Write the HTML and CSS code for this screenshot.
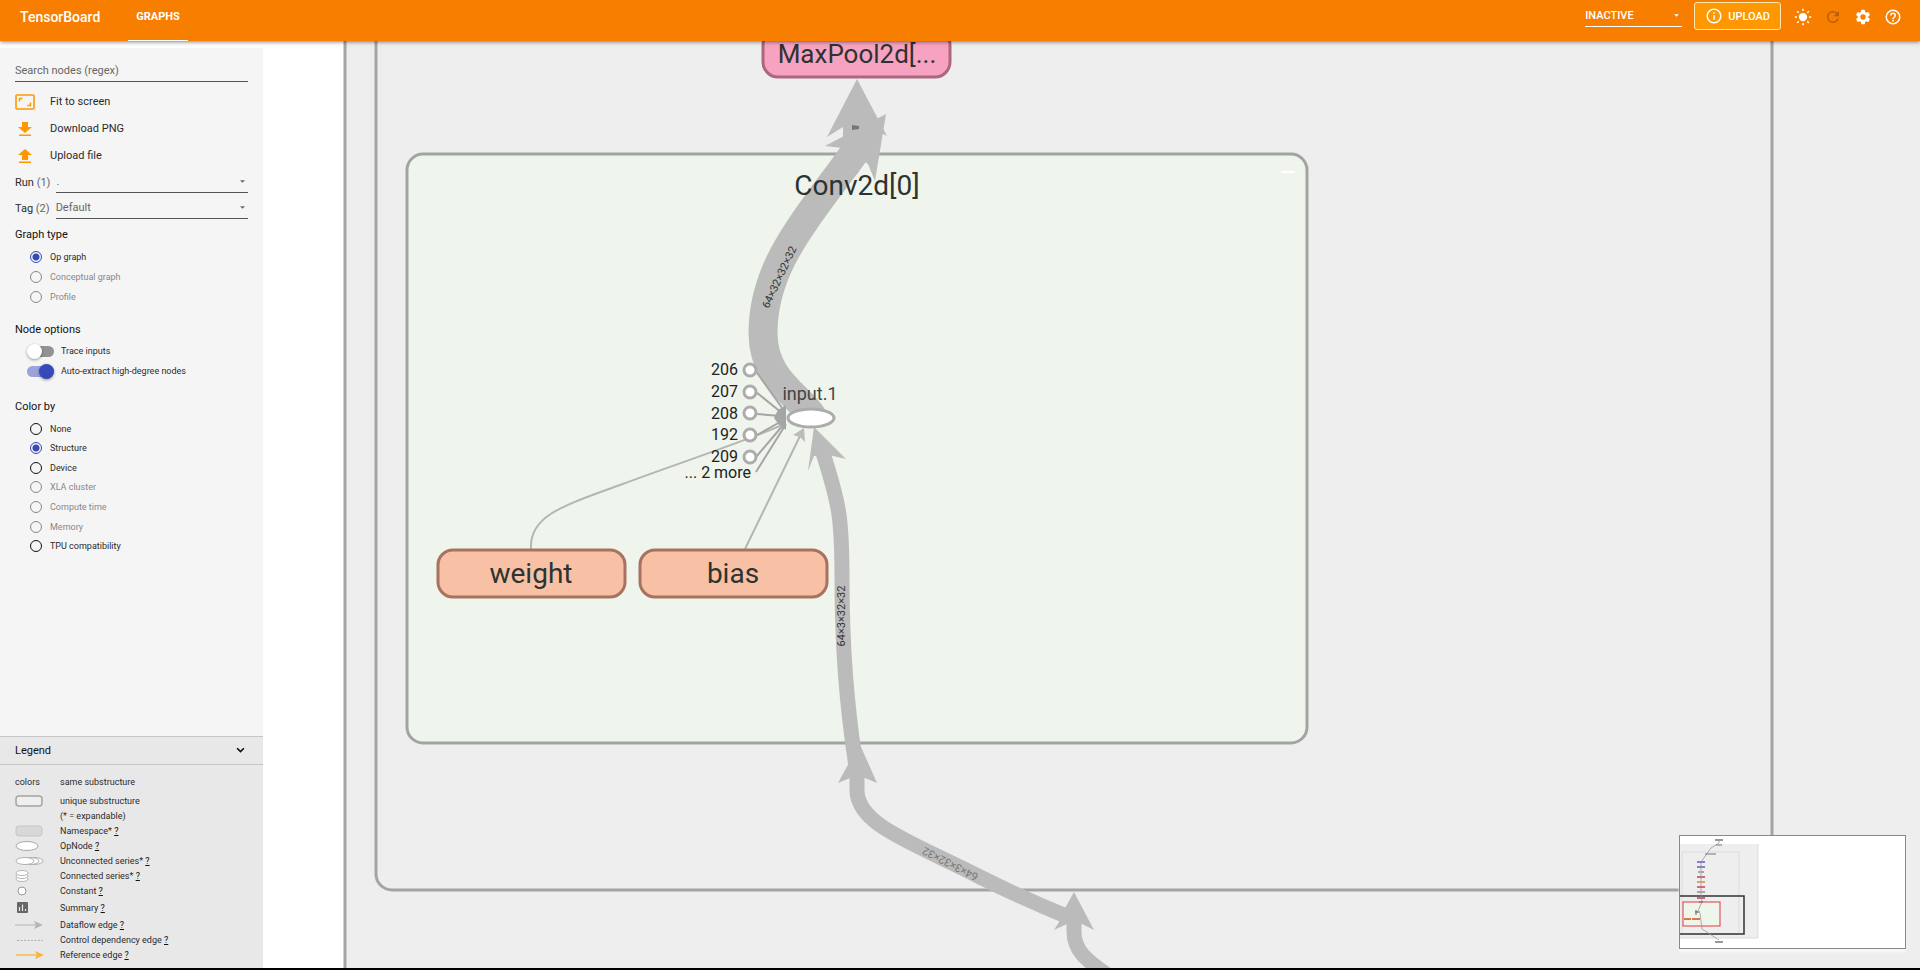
FILE: index.html
```html
<!DOCTYPE html>
<html lang="en">
<head>
<meta charset="utf-8">
<title>TensorBoard</title>
<link rel="stylesheet" href="styles.css">
</head>
<body>
<header class="toolbar">
  <h1 class="brand">TensorBoard</h1>
  <nav class="tabs"><a class="tab" href="#graphs">GRAPHS</a></nav>
  <div class="tools">
    <div class="picker picker-light">
      <select class="picker-input" aria-label="Inactive plugins"><option>INACTIVE</option></select>
      <svg class="caret" viewBox="0 0 6 3" aria-hidden="true"><path d="M0 0h6l-3 3z"/></svg>
    </div>
    <button class="upload" type="button">
      <svg class="icon-upload" viewBox="0 0 24 24" aria-hidden="true"><path d="M11 7h2v2h-2zm0 4h2v6h-2zm1-9C6.480 2 2 6.480 2 12s4.480 10 10 10 10-4.480 10-10S17.520 2 12 2zm0 18c-4.410 0-8-3.590-8-8s3.590-8 8-8 8 3.590 8 8-3.590 8-8 8z"/></svg>
      UPLOAD
    </button>
    <button class="tool" type="button" aria-label="Theme">
      <svg viewBox="0 0 24 24"><circle cx="12" cy="12" r="5.500"/><path d="M11 1h2v3h-2zM11 20h2v3h-2zM1 11h3v2H1zM20 11h3v2h-3zM3.500 4.900l1.400-1.400L7 5.600 5.600 7zM17 18.400l1.400-1.400 2.100 2.100-1.400 1.400zM17 5.600l2.100-2.100 1.400 1.400L18.400 7zM3.500 19.100L5.600 17 7 18.400l-2.100 2.100z"/></svg>
    </button>
    <button class="tool tool-off" type="button" aria-label="Reload" disabled>
      <svg viewBox="0 0 24 24"><path d="M17.650 6.350A7.960 7.960 0 0 0 12 4a8 8 0 1 0 7.730 10h-2.080A6 6 0 1 1 12 6c1.660 0 3.140.690 4.220 1.780L13 11h7V4z"/></svg>
    </button>
    <button class="tool" type="button" aria-label="Settings">
      <svg viewBox="0 0 24 24"><path d="M19.140 12.940c.040-.300.060-.610.060-.940s-.020-.640-.070-.940l2.030-1.580a.490.490 0 0 0 .120-.610l-1.920-3.320a.488.488 0 0 0-.590-.220l-2.390.960a7.030 7.030 0 0 0-1.620-.940l-.360-2.540A.484.484 0 0 0 13.920 2.400h-3.840c-.240 0-.430.170-.470.410l-.360 2.540c-.590.240-1.130.570-1.620.940l-2.390-.960a.480.480 0 0 0-.590.220L2.740 8.870a.470.470 0 0 0 .120.610l2.030 1.580c-.050.300-.090.630-.090.940s.020.640.070.940l-2.030 1.580a.490.490 0 0 0-.120.610l1.920 3.320c.120.220.370.290.590.220l2.390-.960c.500.380 1.030.700 1.620.940l.360 2.540c.050.240.240.410.480.410h3.840c.240 0 .440-.170.470-.410l.360-2.540c.590-.240 1.130-.560 1.620-.940l2.390.960c.220.080.470 0 .590-.220l1.920-3.320a.470.470 0 0 0-.120-.610zM12 15.600a3.600 3.600 0 1 1 0-7.200 3.600 3.600 0 0 1 0 7.200z"/></svg>
    </button>
    <button class="tool" type="button" aria-label="Help">
      <svg viewBox="0 0 24 24"><path d="M11 18h2v-2h-2zm1-16a10 10 0 1 0 0 20 10 10 0 0 0 0-20zm0 18a8 8 0 1 1 0-16 8 8 0 0 1 0 16zm0-14a4 4 0 0 0-4 4h2a2 2 0 1 1 4 0c0 2-3 1.750-3 5h2c0-2.250 3-2.500 3-5a4 4 0 0 0-4-4z"/></svg>
    </button>
  </div>
</header>

<div class="shell">
  <aside class="sidebar">
    <div class="controls">
      <input class="search" type="text" placeholder="Search nodes (regex)" aria-label="Search nodes (regex)">
      <button class="action" type="button">
        <svg viewBox="0 0 20 16"><path d="M2 1h16q1 0 1 1v12q0 1-1 1H2q-1 0-1-1V2q0-1 1-1z" fill="none" stroke="currentColor" stroke-width="1.600"/><path d="M4.500 7.500v-3h3M15.500 8.500v3h-3" fill="none" stroke="currentColor" stroke-width="1.500"/></svg>
        Fit to screen
      </button>
      <button class="action" type="button">
        <svg viewBox="0 0 20 16"><path d="M7 1h6v5h4l-7 6-7-6h4zM4 13.500h12V15H4z"/></svg>
        Download PNG
      </button>
      <button class="action" type="button">
        <svg viewBox="0 0 20 16"><path d="M7 12h6V7h4l-7-6-7 6h4zM4 13.500h12V15H4z"/></svg>
        Upload file
      </button>
      <div class="field">
        <label for="run">Run <span class="count">(1)</span></label>
        <div class="picker">
          <select class="picker-input" id="run"><option>.</option></select>
          <svg class="caret" viewBox="0 0 6 3" aria-hidden="true"><path d="M0 0h6l-3 3z"/></svg>
        </div>
      </div>
      <div class="field">
        <label for="tag">Tag <span class="count">(2)</span></label>
        <div class="picker">
          <select class="picker-input" id="tag"><option>Default</option></select>
          <svg class="caret" viewBox="0 0 6 3" aria-hidden="true"><path d="M0 0h6l-3 3z"/></svg>
        </div>
      </div>

      <section class="group">
        <h2 class="title">Graph type</h2>
        <label class="option"><input class="radio" type="radio" name="type" checked>Op graph</label>
        <label class="option off"><input class="radio" type="radio" name="type" disabled>Conceptual graph</label>
        <label class="option off"><input class="radio" type="radio" name="type" disabled>Profile</label>
      </section>
      <section class="group">
        <h2 class="title title-tight">Node options</h2>
        <label class="option switch"><input class="toggle" type="checkbox">Trace inputs</label>
        <label class="option switch"><input class="toggle" type="checkbox" checked>Auto-extract high-degree nodes</label>
      </section>
      <section class="group group-last">
        <h2 class="title">Color by</h2>
        <div class="colors">
          <label class="option"><input class="radio" type="radio" name="color">None</label>
          <label class="option"><input class="radio" type="radio" name="color" checked>Structure</label>
          <label class="option"><input class="radio" type="radio" name="color">Device</label>
          <label class="option off"><input class="radio" type="radio" name="color" disabled>XLA cluster</label>
          <label class="option off"><input class="radio" type="radio" name="color" disabled>Compute time</label>
          <label class="option off"><input class="radio" type="radio" name="color" disabled>Memory</label>
          <label class="option"><input class="radio" type="radio" name="color">TPU compatibility</label>
        </div>
      </section>
    </div>

    <section class="legend">
      <button class="legend-head" type="button">Legend
        <svg viewBox="0 0 8 6" aria-hidden="true"><path d="M1 1l3 3 3-3" fill="none" stroke="currentColor" stroke-width="1.500"/></svg>
      </button>
      <ul class="keys">
        <li class="key key-first"><span class="swatch">colors</span><span>same substructure</span></li>
        <li class="key"><svg class="swatch" viewBox="0 0 30 15"><rect x="1" y="2" width="26" height="10" rx="3" fill="#efefef" stroke="#a4a4a4" stroke-width="1.500"/></svg><span>unique substructure</span></li>
        <li class="key"><span class="swatch"></span><span>(* = expandable)</span></li>
        <li class="key"><svg class="swatch" viewBox="0 0 30 15"><rect x="1" y="2" width="26" height="10" rx="3" fill="#d8d8d8" stroke="#c6c6c6"/></svg><span>Namespace* <a href="#namespace">?</a></span></li>
        <li class="key"><svg class="swatch" viewBox="0 0 30 15"><ellipse cx="12" cy="7" rx="11" ry="4.500" fill="#fff" stroke="#a9a9a9"/></svg><span>OpNode <a href="#opnode">?</a></span></li>
        <li class="key"><svg class="swatch" viewBox="0 0 30 15"><g fill="#fff" stroke="#b0b0b0"><ellipse cx="19" cy="7" rx="9" ry="3.500"/><ellipse cx="15" cy="7" rx="9" ry="3.500"/><ellipse cx="10" cy="7" rx="9" ry="3.500"/></g></svg><span>Unconnected series* <a href="#unconnected">?</a></span></li>
        <li class="key"><svg class="swatch" viewBox="0 0 30 15"><g fill="#fff" stroke="#b5b5b5"><ellipse cx="7" cy="10" rx="6" ry="2.500"/><ellipse cx="7" cy="7" rx="6" ry="2.500"/><ellipse cx="7" cy="4" rx="6" ry="2.500"/></g></svg><span>Connected series* <a href="#connected">?</a></span></li>
        <li class="key"><svg class="swatch" viewBox="0 0 30 15"><circle cx="7" cy="7" r="4" fill="#fff" stroke="#999"/></svg><span>Constant <a href="#constant">?</a></span></li>
        <li class="key key-tall"><svg class="swatch" viewBox="0 0 30 15"><rect x="2" y="1" width="11" height="11" rx="1" fill="#666"/><path d="M4.500 10V6M7.500 10V3.500M10.500 10V8" stroke="#e8e8e8" stroke-width="1.200"/></svg><span>Summary <a href="#summary">?</a></span></li>
        <li class="key"><svg class="swatch" viewBox="0 0 30 15"><path d="M0 7h22" stroke="#b5b5b5"/><path d="M28 7l-9-4 2 4-2 4z" fill="#b5b5b5"/></svg><span>Dataflow edge <a href="#dataflow">?</a></span></li>
        <li class="key"><svg class="swatch" viewBox="0 0 30 15"><path d="M2 7.500h26" stroke="#b0b0b0" stroke-dasharray="2 1.500"/></svg><span>Control dependency edge <a href="#control">?</a></span></li>
        <li class="key"><svg class="swatch" viewBox="0 0 30 15"><path d="M1 7h22" stroke="#fbb13a" stroke-width="1.300"/><path d="M29 7l-9-4 2 4-2 4z" fill="#fbb13a"/></svg><span>Reference edge <a href="#reference">?</a></span></li>
      </ul>
    </section>
  </aside>

  <main class="canvas">
    <svg class="graph" role="img" aria-label="Model graph">
      <defs>
        <path id="out-edge" d="M812 416C800 396 763 380 763 333C763 270 799 228 847 163"/>
      </defs>
      <g transform="translate(-263 -41)">
        <rect class="scope" x="345" y="-20" width="2400" height="1200"/>
        <rect class="scope" x="376" y="-20" width="1396" height="910" rx="16"/>
        <rect class="node pink" x="763" y="30" width="187" height="47" rx="15"/>
        <text class="name name-cut" x="857" y="63">MaxPool2d[...</text>
        <rect class="conv" x="407" y="154" width="900" height="589" rx="16"/>
        <path d="M1281 172h14" stroke="#fff" stroke-width="2"/>

        <g class="wide">
          <path class="w15" d="M1074 918V932C1074 950 1086 960 1106 974"/>
          <path class="w15" d="M857 765V790C857 825 912 842 980 877Q1020 897 1066 916"/>
          <path class="w15" d="M856 766C848 715 842 660 842 580C842 520 840 505 822 450"/>
        </g>
        <g class="head">
          <path d="M1074 892l20 38-12-6h-15l-13 6 5-8 5-12z"/>
          <path d="M857 738l20 45-12-5h-15l-12 5 12-22z"/>
          <path d="M814 427l32 32-17-4-15 1-6 15z"/>
        </g>
        <use href="#out-edge" class="w29"/>
        <path class="w29" d="M845 166L862 142"/>
        <g class="head">
          <path d="M886 114L825 146l18 2 25 16 7 17z"/>
          <path d="M857 79l30 57-8-4-36 15v-20l-16 10z"/>
        </g>
        <path d="M852 125l7 1v3l-7 1z" fill="#777"/>
        <g class="thin">
          <path d="M531 549C529 516 562 506 620 485C665 468 740 443 780 426"/>
          <path d="M745 549L801 434"/>
          <path class="dark" d="M755 370L785 412M756 392L782 413M757 414L780 416M757 435L782 421M756 457L784 424M756 472L786 424"/>
        </g>
        <path class="head" d="M804 428l-11 7 7 2 5 5z"/>
        <path d="M774 418l4-8 8-5v25l-7-5z" fill="#a5a5a5"/>
        <ellipse class="op" cx="811" cy="418" rx="23" ry="9"/>
        <g class="op">
          <circle cx="750" cy="370" r="6"/><circle cx="750" cy="392" r="6"/><circle cx="750" cy="413" r="6"/><circle cx="750" cy="435" r="6"/><circle cx="750" cy="457" r="6"/>
        </g>
        <g class="ann">
          <text x="738" y="375">206</text><text x="738" y="397">207</text><text x="738" y="419">208</text><text x="738" y="440">192</text><text x="738" y="462">209</text>
          <text x="751" y="478">... 2 more</text>
        </g>
        <text class="opname" x="810" y="400">input.1</text>

        <rect class="node peach" x="438" y="550" width="187" height="47" rx="15"/>
        <rect class="node peach" x="640" y="550" width="187" height="47" rx="15"/>
        <text class="name" x="531" y="583">weight</text>
        <text class="name" x="733" y="583">bias</text>
        <text class="name" x="857" y="195">Conv2d[0]</text>

        <text class="dim" transform="translate(779 277) rotate(-65)" y="4">64×32×32×32</text>
        <text class="dim" transform="translate(841 616) rotate(-90)" y="4">64×3×32×32</text>
        <text class="dim faint" transform="translate(950 864) rotate(207)" y="4">64×3×32×32</text>
      </g>
    </svg>
    <svg class="minimap" viewBox="0 0 225 112" role="img" aria-label="Minimap">
      <rect x="0" y="8" width="78" height="94" fill="#eee"/>
      <path d="M78 8v94H0M2 16h57v82H2z" fill="none" stroke="#ddd"/>
      <path d="M0 60h64v38H0" fill="none" stroke="#333" stroke-width="1.500"/>
      <rect x="3" y="66" width="37" height="24" fill="#eef5ea" stroke="#e2393f"/>
      <path d="M39 5v2l-8 5-10 14v32l1 8-5 11M20 77l2 16 17 11" fill="none" stroke="#999" stroke-width=".800"/>
      <g stroke-width="2">
        <path d="M35 4h8M35 106h8" stroke="#999"/>
        <path d="M25 18h11M36 9h6" stroke="#777" stroke-width="1"/>
        <path d="M17 26h8M17 31h8" stroke="#8a80c0"/>
        <path d="M18 36h6M17 56h8" stroke="#a2aaa2"/>
        <path d="M17 41h8M17 51h8M17 62h8" stroke="#cc6788"/>
        <path d="M17 46h8" stroke="#cfa868"/>
        <path d="M4 83h7M12 83h8" stroke="#dd7450"/>
      </g>
      <path d="M15 76h5M16 74v5M19 66h4" stroke="#666"/>
    </svg>
  </main>
</div>
</body>
</html>
```
FILE: styles.css
```css
* { box-sizing: border-box; }

body {
  margin: 0;
  height: 100vh;
  display: flex;
  flex-direction: column;
  font: 11px/15px Roboto, "Liberation Sans", sans-serif;
  color: #2b2b2b;
  background: #fff;
  border-bottom: 2px solid #000;
  overflow: hidden;
}

button, input, select {
  margin: 0;
  padding: 0;
  border: 0;
  font: inherit;
  color: inherit;
  background: none;
}

svg { display: block; flex: none; }

/* Toolbar */
.toolbar {
  flex: none;
  display: flex;
  height: 41px;
  padding: 0 12px 0 20px;
  color: #fff;
  background: #f87e00;
  box-shadow: 0 1px 4px rgba(0, 0, 0, .5);
  z-index: 2;
}
.brand { margin: 0; font-size: 14px; line-height: 34px; font-weight: 500; }
.tabs { display: flex; margin-left: 28px; }
.tab {
  padding: 0 8px;
  border-bottom: 1px solid #fff;
  font-weight: 700;
  line-height: 33px;
  color: #fff;
  text-decoration: none;
}
.tools { display: flex; align-items: flex-start; margin-left: auto; }

.picker { display: flex; align-items: center; flex: 1; border-bottom: 1px solid #555; }
.picker-input { flex: 1; min-width: 0; height: 20px; appearance: none; color: #666; }
.caret { width: 5px; height: 3px; margin: 0 3px 0 -8px; fill: #666; pointer-events: none; }
.picker-light { flex: none; width: 97px; height: 27px; margin-right: 12px; padding-top: 5px; border-color: #fff; }
.picker-light .picker-input { color: #fff; font-weight: 500; }
.picker-light .caret { fill: #fff; }

.upload {
  display: flex;
  align-items: center;
  gap: 5px;
  height: 28px;
  margin: 2px 7px 0 0;
  padding: 0 10px;
  border: 1px solid #ffe9b0;
  border-radius: 3px;
  background: #ff9800;
  font-weight: 500;
}
.icon-upload { width: 18px; height: 18px; fill: currentColor; }
.tool { display: flex; width: 30px; height: 34px; align-items: center; justify-content: center; }
.tool svg { width: 18px; height: 18px; fill: currentColor; }
.tool-off { color: #b65f0c; }

/* Sidebar */
.shell { flex: 1; min-height: 0; display: flex; }
.sidebar {
  flex: none;
  width: 263px;
  margin-top: 7px;
  display: flex;
  flex-direction: column;
  background: #f5f5f5;
}
.controls { flex: 1; padding: 12px 15px 0; }
.search { display: block; width: 100%; height: 22px; margin-bottom: 6px; border-bottom: 1px solid #555; }
.search::placeholder { color: #666; opacity: 1; }
.action { display: flex; align-items: center; gap: 15px; width: 100%; height: 27px; }
.action svg { width: 20px; height: 16px; color: #ff9800; fill: #ff9800; }
.field { display: flex; align-items: center; gap: 6px; height: 26px; }
.count { color: #666; }

.group { margin-top: 11px; }
.field + .group { margin-top: 1px; }
.group-last { margin-top: 13px; }
.title { margin: 0; font-size: 11px; font-weight: 400; line-height: 25px; color: #111; }
.title-tight { line-height: 23px; }
.option { display: flex; align-items: center; gap: 8px; height: 20px; padding-left: 15px; font-size: 9px; line-height: 12px; }
.off { color: #888; }
.radio { appearance: none; width: 12px; height: 12px; border: 1px solid #111; border-radius: 50%; }
.radio:disabled { border-color: #888; }
.radio:checked { border-color: #3549b8; background: radial-gradient(circle, #3549b8 3px, transparent 4px); }
.colors { display: grid; grid-template-rows: repeat(7, 1fr); height: 137px; align-items: center; }
.colors .option { height: 16px; }

.switch { padding-left: 12px; gap: 7px; }
.toggle { appearance: none; position: relative; width: 27px; height: 11px; border-radius: 6px; background: linear-gradient(90deg, transparent 7px, #929292 7px); }
.toggle::before {
  content: "";
  position: absolute;
  top: -2px;
  left: 0;
  width: 15px;
  height: 15px;
  border-radius: 50%;
  background: #fff;
  box-shadow: 0 1px 3px rgba(0, 0, 0, .4);
}
.toggle:checked { background: #9aa4db; }
.toggle:checked::before { left: 12px; background: #3549b8; }

/* Legend */
.legend { background: #e8e8e8; }
.legend-head {
  display: flex;
  align-items: center;
  justify-content: space-between;
  width: 100%;
  height: 29px;
  padding: 0 18px 0 15px;
  border: solid #c6c6c6;
  border-width: 1px 0;
  color: #111;
}
.legend-head svg { width: 9px; height: 7px; }
.keys { margin: 0; padding: 10px 15px 5px; list-style: none; font-size: 9px; }
.key { display: flex; align-items: center; height: 15px; }
.key-first { margin-bottom: 4px; }
.key-tall { height: 19px; }
.swatch { flex: none; width: 30px; height: 15px; margin-right: 15px; }
.key a { color: #111; text-decoration: underline; }

/* Graph */
.canvas { flex: 1; min-width: 0; position: relative; }
.graph { width: 100%; height: 100%; }
.scope { fill: #eee; stroke: #a4a4a4; stroke-width: 3; }
.conv { fill: #eff5ec; stroke: #a1a5a0; stroke-width: 3; }
.node { stroke-width: 3; }
.pink { fill: #f8a2c1; stroke: #ac667e; }
.peach { fill: #f8c0a5; stroke: #a7725f; }
.wide, .w29 { fill: none; stroke: #bbb; }
.w15 { stroke-width: 15; }
.w29 { stroke-width: 29; }
.head { fill: #bbb; }
.thin { fill: none; stroke: #b3b6b1; stroke-width: 2; }
.dark { stroke: #a5a5a5; }
.op { fill: #fff; stroke: #acacac; stroke-width: 3; }
.name { font-size: 28px; fill: #2d3330; text-anchor: middle; }
.name-cut { font-size: 26px; }
.ann { font-size: 16px; fill: #222; text-anchor: end; }
.opname { font-size: 18px; fill: #444; text-anchor: middle; }
.dim { font-size: 11px; fill: #333; text-anchor: middle; }
.faint { fill: #777; }

.minimap {
  position: absolute;
  right: 14px;
  bottom: 19px;
  width: 227px;
  height: 114px;
  border: 1px solid #888;
  background: #fff;
  box-shadow: 0 3px 2px #f8f8f8;
}
```
